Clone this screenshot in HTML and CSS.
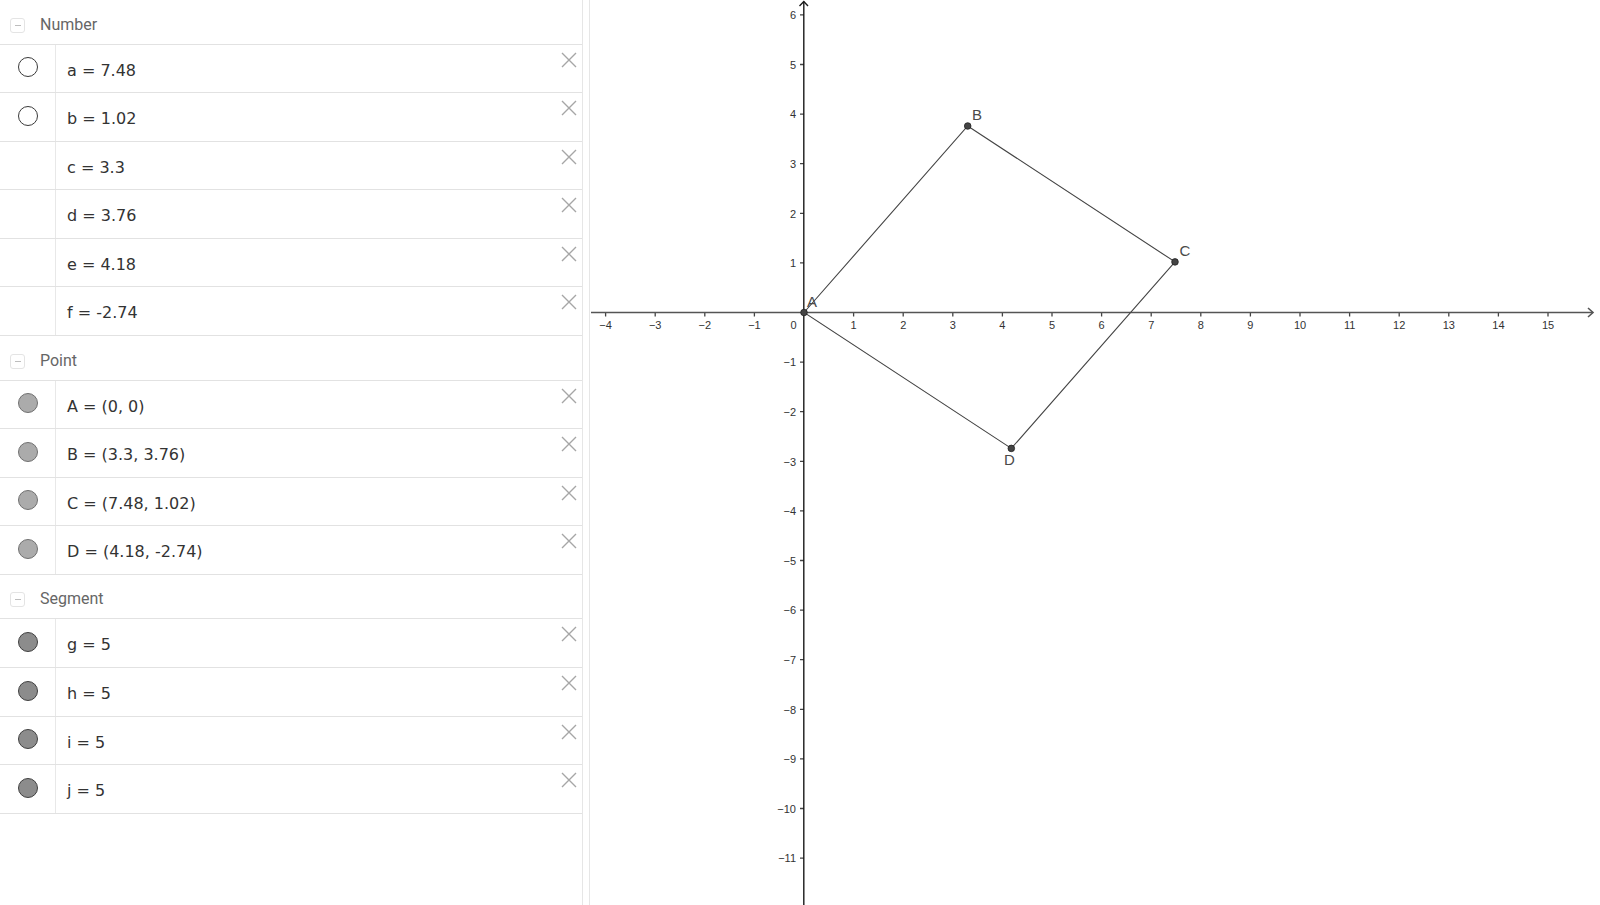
FILE: index.html
```html
<!DOCTYPE html>
<html>
<head>
<meta charset="utf-8">
<link rel="stylesheet" href="styles.css">
</head>
<body>
<div class="app">
  <aside class="algebra">
    <section class="group">
      <div class="group-head"><span class="toggle"></span><span class="group-title">Number</span></div>
      <div class="row"><div class="marker"><span class="dot dot-open"></span></div><div class="value">a = 7.48</div><span class="close"><svg viewBox="0 0 16 16" width="16" height="16"><path d="M1 1L15 15M15 1L1 15"/></svg></span></div>
      <div class="row"><div class="marker"><span class="dot dot-open"></span></div><div class="value">b = 1.02</div><span class="close"><svg viewBox="0 0 16 16" width="16" height="16"><path d="M1 1L15 15M15 1L1 15"/></svg></span></div>
      <div class="row"><div class="marker"></div><div class="value">c = 3.3</div><span class="close"><svg viewBox="0 0 16 16" width="16" height="16"><path d="M1 1L15 15M15 1L1 15"/></svg></span></div>
      <div class="row"><div class="marker"></div><div class="value">d = 3.76</div><span class="close"><svg viewBox="0 0 16 16" width="16" height="16"><path d="M1 1L15 15M15 1L1 15"/></svg></span></div>
      <div class="row"><div class="marker"></div><div class="value">e = 4.18</div><span class="close"><svg viewBox="0 0 16 16" width="16" height="16"><path d="M1 1L15 15M15 1L1 15"/></svg></span></div>
      <div class="row"><div class="marker"></div><div class="value">f = -2.74</div><span class="close"><svg viewBox="0 0 16 16" width="16" height="16"><path d="M1 1L15 15M15 1L1 15"/></svg></span></div>
    </section>
    <section class="group">
      <div class="group-head"><span class="toggle"></span><span class="group-title">Point</span></div>
      <div class="row"><div class="marker"><span class="dot dot-point"></span></div><div class="value">A = (0, 0)</div><span class="close"><svg viewBox="0 0 16 16" width="16" height="16"><path d="M1 1L15 15M15 1L1 15"/></svg></span></div>
      <div class="row"><div class="marker"><span class="dot dot-point"></span></div><div class="value">B = (3.3, 3.76)</div><span class="close"><svg viewBox="0 0 16 16" width="16" height="16"><path d="M1 1L15 15M15 1L1 15"/></svg></span></div>
      <div class="row"><div class="marker"><span class="dot dot-point"></span></div><div class="value">C = (7.48, 1.02)</div><span class="close"><svg viewBox="0 0 16 16" width="16" height="16"><path d="M1 1L15 15M15 1L1 15"/></svg></span></div>
      <div class="row"><div class="marker"><span class="dot dot-point"></span></div><div class="value">D = (4.18, -2.74)</div><span class="close"><svg viewBox="0 0 16 16" width="16" height="16"><path d="M1 1L15 15M15 1L1 15"/></svg></span></div>
    </section>
    <section class="group">
      <div class="group-head"><span class="toggle"></span><span class="group-title">Segment</span></div>
      <div class="row"><div class="marker"><span class="dot dot-seg"></span></div><div class="value">g = 5</div><span class="close"><svg viewBox="0 0 16 16" width="16" height="16"><path d="M1 1L15 15M15 1L1 15"/></svg></span></div>
      <div class="row"><div class="marker"><span class="dot dot-seg"></span></div><div class="value">h = 5</div><span class="close"><svg viewBox="0 0 16 16" width="16" height="16"><path d="M1 1L15 15M15 1L1 15"/></svg></span></div>
      <div class="row"><div class="marker"><span class="dot dot-seg"></span></div><div class="value">i = 5</div><span class="close"><svg viewBox="0 0 16 16" width="16" height="16"><path d="M1 1L15 15M15 1L1 15"/></svg></span></div>
      <div class="row"><div class="marker"><span class="dot dot-seg"></span></div><div class="value">j = 5</div><span class="close"><svg viewBox="0 0 16 16" width="16" height="16"><path d="M1 1L15 15M15 1L1 15"/></svg></span></div>
    </section>
  </aside>
  <div class="splitter"></div>
  <main class="graphics">
    <svg class="canvas" viewBox="590 0 1010 905" width="1010" height="905">
      <g class="ticks">
        <path d="M605.6 312.5v4M655.2 312.5v4M704.8 312.5v4M754.4 312.5v4M853.6 312.5v4M903.2 312.5v4M952.8 312.5v4M1002.4 312.5v4M1052 312.5v4M1101.6 312.5v4M1151.2 312.5v4M1200.8 312.5v4M1250.4 312.5v4M1300 312.5v4M1349.6 312.5v4M1399.2 312.5v4M1448.8 312.5v4M1498.4 312.5v4M1548 312.5v4"/>
        <path d="M800 14.9h4M800 64.5h4M800 114.1h4M800 163.7h4M800 213.3h4M800 262.9h4M800 362.1h4M800 411.7h4M800 461.3h4M800 510.9h4M800 560.5h4M800 610.1h4M800 659.7h4M800 709.3h4M800 758.9h4M800 808.5h4M800 858.1h4"/>
      </g>
      <line class="axis-x" x1="591" y1="312.5" x2="1593" y2="312.5"/>
      <polyline class="axis-x arrow" points="1588,308 1593,312.5 1588,317"/>
      <line class="axis-y" x1="803.8" y1="1.5" x2="803.8" y2="905"/>
      <polyline class="axis-y arrow" points="799.5,6 803.8,1.5 808,6"/>
      <g class="xlabels">
        <text x="605.6" y="329">−4</text><text x="655.2" y="329">−3</text><text x="704.8" y="329">−2</text><text x="754.4" y="329">−1</text>
        <text x="853.6" y="329">1</text><text x="903.2" y="329">2</text><text x="952.8" y="329">3</text><text x="1002.4" y="329">4</text>
        <text x="1052" y="329">5</text><text x="1101.6" y="329">6</text><text x="1151.2" y="329">7</text><text x="1200.8" y="329">8</text>
        <text x="1250.4" y="329">9</text><text x="1300" y="329">10</text><text x="1349.6" y="329">11</text><text x="1399.2" y="329">12</text>
        <text x="1448.8" y="329">13</text><text x="1498.4" y="329">14</text><text x="1548" y="329">15</text>
      </g>
      <g class="ylabels">
        <text x="796.5" y="329">0</text>
        <text x="796" y="19.2">6</text><text x="796" y="68.8">5</text><text x="796" y="118.4">4</text><text x="796" y="168">3</text>
        <text x="796" y="217.6">2</text><text x="796" y="267.2">1</text><text x="796" y="366.4">−1</text><text x="796" y="416">−2</text>
        <text x="796" y="465.6">−3</text><text x="796" y="515.2">−4</text><text x="796" y="564.8">−5</text><text x="796" y="614.4">−6</text>
        <text x="796" y="664">−7</text><text x="796" y="713.6">−8</text><text x="796" y="763.2">−9</text><text x="796" y="812.8">−10</text>
        <text x="796" y="862.4">−11</text>
      </g>
      <polygon class="quad" points="804,312.5 967.7,126 1175,261.9 1011.3,448.4"/>
      <g class="pts">
        <circle cx="804" cy="312.5" r="3.3"/>
        <circle cx="967.7" cy="126" r="3.3"/>
        <circle cx="1175" cy="261.9" r="3.3"/>
        <circle cx="1011.3" cy="448.4" r="3.3"/>
      </g>
      <g class="plabels">
        <text x="807" y="306.7">A</text>
        <text x="972" y="120">B</text>
        <text x="1179.5" y="255.7">C</text>
        <text x="1004" y="465">D</text>
      </g>
    </svg>
  </main>
</div>
</body>
</html>
```
FILE: styles.css
```css
html, body {
  margin: 0;
  padding: 0;
  background: #fff;
}
body {
  width: 1600px;
  height: 905px;
  overflow: hidden;
  font-family: "DejaVu Sans", sans-serif;
}
.app {
  display: flex;
  height: 905px;
}
.algebra {
  width: 583px;
  box-sizing: border-box;
  border-right: 1px solid #e6e6e6;
  flex: none;
}
.splitter {
  width: 6px;
  flex: none;
  background: #fff;
}
.graphics {
  flex: 1;
  border-left: 1px solid #e6e6e6;
  position: relative;
  overflow: hidden;
}
.canvas {
  display: block;
}
.group-head {
  height: 44.5px;
  box-sizing: border-box;
  border-bottom: 1px solid #e2e2e2;
  display: flex;
  align-items: flex-start;
  padding: 14.5px 0 0 10px;
}
.toggle {
  width: 15px;
  height: 15px;
  box-sizing: border-box;
  border: 1px solid #e4e4e4;
  border-radius: 3px;
  margin-top: 3px;
  position: relative;
  flex: none;
}
.toggle::after {
  content: "";
  position: absolute;
  left: 3.5px;
  right: 3.5px;
  top: 6px;
  height: 1px;
  background: #bdbdbd;
}
.group-title {
  margin-left: 15px;
  font-family: Roboto, "Noto Sans", sans-serif;
  font-size: 16px;
  line-height: 20px;
  color: #666;
}
.row {
  height: 48.6px;
  box-sizing: border-box;
  border-bottom: 1px solid #e2e2e2;
  display: flex;
  align-items: stretch;
}
.marker {
  width: 56px;
  flex: none;
  box-sizing: border-box;
  border-right: 1px solid #e8e8e8;
  display: flex;
  justify-content: center;
  align-items: flex-start;
  padding-top: 12.5px;
}
.dot {
  width: 20px;
  height: 20px;
  box-sizing: border-box;
  border-radius: 50%;
  display: block;
}
.dot-open {
  border: 1.4px solid #3a3a3a;
  background: #fff;
}
.dot-point {
  border: 1px solid #707070;
  background: #ababab;
}
.dot-seg {
  border: 1.2px solid #404040;
  background: #8c8c8c;
}
.value {
  flex: 1;
  padding: 16px 0 0 11px;
  font-size: 16px;
  line-height: 20px;
  color: #333;
  white-space: pre;
}
.close {
  flex: none;
  margin: 7px 5.5px 0 0;
  width: 16px;
  height: 16px;
}
.close svg {
  display: block;
  fill: none;
  stroke: #a6a6a6;
  stroke-width: 1.4;
}
.ticks path {
  stroke: #444;
  stroke-width: 1.3;
  fill: none;
}
.axis-x {
  stroke: #555;
  stroke-width: 1.6;
  fill: none;
}
.axis-y {
  stroke: #1a1a1a;
  stroke-width: 1.4;
  fill: none;
}
.xlabels text, .ylabels text {
  font-family: "Liberation Sans", Arial, sans-serif;
  font-size: 11px;
  fill: #333;
}
.xlabels text {
  text-anchor: middle;
}
.ylabels text {
  text-anchor: end;
}
.quad {
  fill: none;
  stroke: #444;
  stroke-width: 1.1;
}
.pts circle {
  fill: #444;
  stroke: #222;
  stroke-width: 0.8;
}
.plabels text {
  font-family: "Liberation Sans", Arial, sans-serif;
  font-size: 15px;
  fill: #4a4a4a;
}
```
